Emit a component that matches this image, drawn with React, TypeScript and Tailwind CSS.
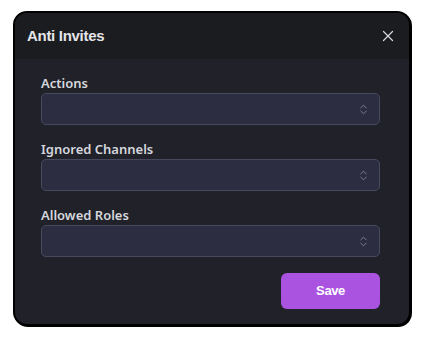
import React from "react";
import { X, ChevronsUpDown } from "lucide-react";

function Field({ label }: { label: string }) {
  return (
    <div className="flex flex-col">
      <label className="h-[18px] mb-[1px] flex items-center text-[13px] font-semibold text-[#d6d8de] [font-family:'Noto_Sans',sans-serif] leading-none">
        {label}
      </label>
      <div className="h-[32px] rounded-[5px] border border-[#474a5e] bg-[#2c2d40] flex items-center justify-end pr-[9px]">
        <ChevronsUpDown size={13} strokeWidth={1.5} className="text-[#8d8fa0]" />
      </div>
    </div>
  );
}

export default function App() {
  return (
    <div className="w-[423px] h-[337px] bg-white pt-[11px] pl-[13px]">
      <div className="w-[398px] h-[315px] rounded-[14px] border-2 border-black shadow-[1px_1px_0_0_#000] overflow-hidden flex flex-col bg-[#202129]">
        <div className="h-[46px] shrink-0 bg-[#1b1c20] flex items-center justify-between pl-[12px] pr-[12px]">
          <h2 className="text-[15px] font-bold tracking-[-0.3px] text-[#e4e5e9] [font-family:'Liberation_Sans',Arial,sans-serif]">
            Anti Invites
          </h2>
          <X size={18} strokeWidth={1.6} className="text-[#d9dbe0]" />
        </div>
        <div className="flex flex-col pl-[26px] pr-[29px] pt-[15px]">
          <div className="flex flex-col gap-[15px]">
            <Field label="Actions" />
            <Field label="Ignored Channels" />
            <Field label="Allowed Roles" />
          </div>
          <div className="flex justify-end mt-[16px]">
            <button className="w-[99px] h-[36px] rounded-[6px] bg-[#a953e0] text-white text-[13px] font-bold tracking-[-0.4px] [font-family:'Liberation_Sans',Arial,sans-serif]">
              Save
            </button>
          </div>
        </div>
      </div>
    </div>
  );
}
